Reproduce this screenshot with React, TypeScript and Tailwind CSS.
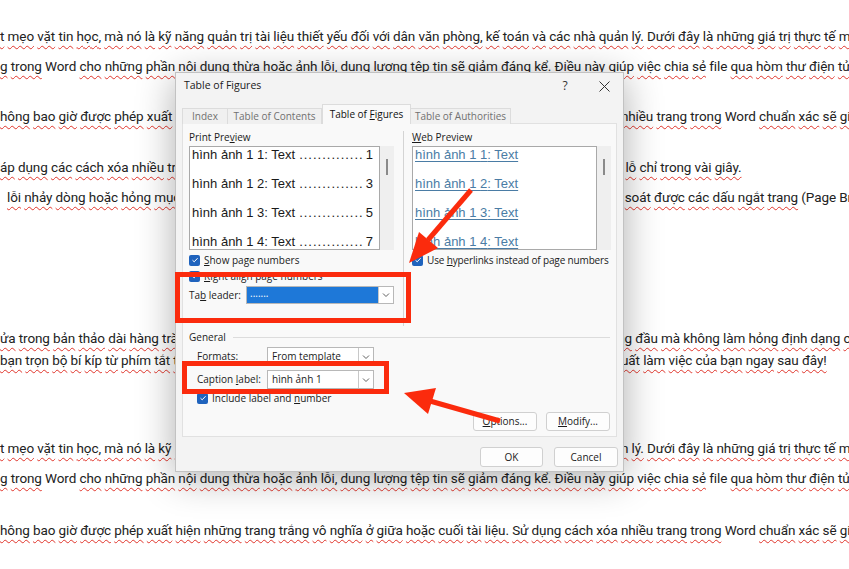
import React from 'react';

const NO_UL = new Set(['Word', 'file', '(Page', 'Break)']);

function DocLine({ text, className }: { text: string; className: string }) {
  const parts = text.split(' ');
  return (
    <div className={`whitespace-nowrap h-[20px] leading-[20px] ${className}`}>
      {parts.map((w, i) => (
        <React.Fragment key={i}>
          {i > 0 ? ' ' : ''}
          {NO_UL.has(w) ? (
            w
          ) : (
            <span className="underline decoration-wavy decoration-[#e0352b] decoration-1 underline-offset-[4px]">{w}</span>
          )}
        </React.Fragment>
      ))}
    </div>
  );
}

const L1 =
  't mẹo vặt tin học, mà nó là kỹ năng quản trị tài liệu thiết yếu đối với dân văn phòng, kế toán và các nhà quản lý. Dưới đây là những giá trị thực tế mà thủ thuật này mang lại.';
const L2 =
  'g trong Word cho những phần nội dung thừa hoặc ảnh lỗi, dung lượng tệp tin sẽ giảm đáng kể. Điều này giúp việc chia sẻ file qua hòm thư điện tử trở nên nhanh hơn.';
const L3 =
  'hông bao giờ được phép xuất hiện những trang trắng vô nghĩa ở giữa hoặc cuối tài liệu. Sử dụng cách xóa nhiều trang trong Word chuẩn xác sẽ giúp văn bản luôn chỉn chu.';
const L4 =
  'áp dụng các cách xóa nhiều trang trong Word đúng kỹ thuật bạn nhanh chóng loại bỏ mọi khoảng trống và lỗ chỉ trong vài giây.';
const L5 =
  'lỗi nhảy dòng hoặc hỏng mục lục tự động. Khi nắm vững kỹ thuật xóa trang này, bạn luôn hoàn toàn kiểm soát được các dấu ngắt trang (Page Break) một cách dễ dàng.';
const L6 =
  'ửa trong bản thảo dài hàng trăm trang, bạn vẫn có thể dễ dàng dọn dẹp các trang trống ngay từ những trang đầu mà không làm hỏng định dạng của tài liệu.';
const L7 =
  'bạn trọn bộ bí kíp từ phím tắt thần tốc đến những công cụ chuyên sâu nhằm tối ưu hóa và nâng cao hiệu suất làm việc của bạn ngay sau đây!';

function Check() {
  return (
    <span className="flex h-[11px] w-[11px] shrink-0 items-center justify-center rounded-[2px] bg-[#1f63bd]">
      <svg width="8" height="8" viewBox="0 0 8 8">
        <polyline points="1.5,4.2 3.2,5.8 6.6,2.2" fill="none" stroke="#ffffff" strokeWidth="1" />
      </svg>
    </span>
  );
}

function Chevron() {
  return (
    <svg width="10" height="10" viewBox="0 0 10 10">
      <polyline points="2,3.5 5,6.5 8,3.5" fill="none" stroke="#606060" strokeWidth="1" />
    </svg>
  );
}

function PrintEntry({ n, p }: { n: string; p: string }) {
  return (
    <div className="flex h-[16px] items-center leading-[16px] whitespace-nowrap">
      <span>hình ảnh 1 {n}: Text</span>
      <span className="ml-[4px] flex-1 overflow-hidden tracking-[1px]">..............</span>
      <span className="ml-[3px]">{p}</span>
    </div>
  );
}

function WebEntry({ n }: { n: string }) {
  return (
    <div className="h-[16px] leading-[16px] whitespace-nowrap text-[#4a7ca5] underline underline-offset-[2px] decoration-[#4a7ca5]">
      hình ảnh 1 {n}: Text
    </div>
  );
}

function Btn({ children, className }: { children: React.ReactNode; className: string }) {
  return (
    <div
      className={`flex h-[19px] items-center justify-center rounded-[3px] border border-[#d0d0d0] bg-[#fdfdfd] ${className}`}
    >
      {children}
    </div>
  );
}

function Dialog() {
  return (
    <div className="absolute left-[175px] top-[72px] flex h-[400px] w-[449px] flex-col border border-[#c2c2c2] bg-[#f3f3f3] font-['Open_Sans',sans-serif] text-[10px] text-[#1b1b1b] shadow-[0_6px_36px_rgba(0,0,0,0.32)]">
      {/* title bar */}
      <div className="flex h-[26px] items-center pl-[8px]">
        <span className="flex-1 text-[10.5px] text-[#202020]">Table of Figures</span>
        <span className="w-[20px] text-center text-[12px] text-[#333]">?</span>
        <span className="w-[10px]" />
        <span className="flex w-[38px] items-center justify-center">
          <svg width="11" height="11" viewBox="0 0 11 11">
            <line x1="0.5" y1="0.5" x2="10.5" y2="10.5" stroke="#333" strokeWidth="1" />
            <line x1="10.5" y1="0.5" x2="0.5" y2="10.5" stroke="#333" strokeWidth="1" />
          </svg>
        </span>
      </div>
      {/* tabs */}
      <div className="relative z-10 mt-[5px] flex h-[20px] items-end pl-[6px] -mb-px">
        <div className="flex h-[16px] w-[46px] items-center justify-center border border-b-0 border-[#dcdcdc] bg-[#f0f0f0] text-[#707070]">
          Index
        </div>
        <div className="flex h-[16px] w-[94px] items-center justify-center border border-b-0 border-l-0 border-[#dcdcdc] bg-[#f0f0f0] text-[#707070]">
          Table of Contents
        </div>
        <div className="flex h-[20px] w-[89px] items-center justify-center border border-b-0 border-[#dcdcdc] bg-[#f9f9f9] text-[#111]">
          <span>
            Table of <span className="underline underline-offset-[1px]">F</span>igures
          </span>
        </div>
        <div className="flex h-[16px] w-[100px] items-center justify-center border border-b-0 border-l-0 border-[#dcdcdc] bg-[#f0f0f0] text-[#707070]">
          Table of Authorities
        </div>
      </div>
      {/* panel */}
      <div className="mx-[6px] flex h-[314px] flex-col border border-[#e1e1e1] bg-[#f9f9f9]">
        <div className="flex h-[202px]">
          {/* left column */}
          <div className="flex w-[220px] flex-col pl-[6px]">
            <div className="mt-[6px] h-[14px] leading-[14px]">
              Print Pre<span className="underline underline-offset-[1px]">v</span>iew
            </div>
            <div className="mt-[2px] flex h-[104px]">
              <div className="flex w-[191px] flex-col gap-[13px] overflow-hidden border border-[#a9a9a9] bg-white pl-[2px] pr-[6px] font-['Liberation_Sans',Arial,sans-serif] text-[13px] text-[#1a1a1a]">
                <PrintEntry n="1" p="1" />
                <PrintEntry n="2" p="3" />
                <PrintEntry n="3" p="5" />
                <PrintEntry n="4" p="7" />
              </div>
              <div className="relative w-[14px] bg-[#efefef]">
                <div className="absolute left-[6px] top-[13px] h-[16px] w-[2px] bg-[#8a8a8a]" />
              </div>
            </div>
            <div className="mt-[3px] flex h-[14px] items-center gap-[4px]">
              <Check />
              <span>
                <span className="underline underline-offset-[1px]">S</span>how page numbers
              </span>
            </div>
            <div className="mt-[2px] flex h-[14px] items-center gap-[4px]">
              <Check />
              <span>
                <span className="underline underline-offset-[1px]">R</span>ight align page numbers
              </span>
            </div>
            <div className="mt-[3px] flex h-[18px] items-center">
              <span className="w-[57px]">
                Ta<span className="underline underline-offset-[1px]">b</span> leader:
              </span>
              <div className="flex h-[18px] w-[148px] border border-[#b8b8b8] bg-white">
                <div className="flex flex-1 items-center bg-[#1e78d8] pl-[3px] text-[10px] leading-none text-white">
                  <span className="-mt-[4px]">.......</span>
                </div>
                <div className="flex w-[15px] items-center justify-center border-l border-[#c8c8c8]">
                  <Chevron />
                </div>
              </div>
            </div>
          </div>
          {/* separator */}
          <div className="mt-[7px] h-[195px] w-px bg-[#d4d4d4]" />
          {/* right column */}
          <div className="flex flex-col pl-[8px]">
            <div className="mt-[6px] h-[14px] leading-[14px]">
              <span className="underline underline-offset-[1px]">W</span>eb Preview
            </div>
            <div className="mt-[2px] flex h-[104px]">
              <div className="flex w-[185px] flex-col gap-[13px] overflow-hidden border border-[#a9a9a9] bg-white pl-[2px] font-['Liberation_Sans',Arial,sans-serif] text-[13px]">
                <WebEntry n="1" />
                <WebEntry n="2" />
                <WebEntry n="3" />
                <WebEntry n="4" />
              </div>
              <div className="relative w-[14px] bg-[#efefef]">
                <div className="absolute left-[6px] top-[13px] h-[16px] w-[2px] bg-[#8a8a8a]" />
              </div>
            </div>
            <div className="mt-[3px] flex h-[14px] items-center gap-[4px] tracking-[-0.15px]">
              <Check />
              <span>
                Use <span className="underline underline-offset-[1px]">h</span>yperlinks instead of page numbers
              </span>
            </div>
          </div>
        </div>
        {/* general */}
        <div className="mt-[4px] flex h-[14px] items-center pl-[6px] pr-[6px]">
          <span>General</span>
          <div className="ml-[7px] h-px flex-1 bg-[#dcdcdc]" />
        </div>
        <div className="mt-[3px] flex h-[19px] items-center pl-[14px]">
          <span className="w-[70px]">Formats:</span>
          <div className="flex h-[19px] w-[107px] border border-[#b8b8b8] bg-white">
            <div className="flex flex-1 items-center pl-[4px]">From template</div>
            <div className="flex w-[15px] items-center justify-center border-l border-[#c8c8c8]">
              <Chevron />
            </div>
          </div>
        </div>
        <div className="mt-[4px] flex h-[19px] items-center pl-[14px]">
          <span className="w-[70px]">
            Caption <span className="underline underline-offset-[1px]">l</span>abel:
          </span>
          <div className="flex h-[19px] w-[107px] border border-[#b8b8b8] bg-white">
            <div className="flex flex-1 items-center pl-[4px]">hình ảnh 1</div>
            <div className="flex w-[15px] items-center justify-center border-l border-[#c8c8c8]">
              <Chevron />
            </div>
          </div>
        </div>
        <div className="mt-[2px] flex h-[14px] items-center gap-[4px] pl-[14px]">
          <Check />
          <span>
            Include label and <span className="underline underline-offset-[1px]">n</span>umber
          </span>
        </div>
        <div className="mt-[7px] flex justify-end gap-[9px] pr-[6px]">
          <Btn className="w-[64px]">
            <span>
              <span className="underline underline-offset-[1px]">O</span>ptions...
            </span>
          </Btn>
          <Btn className="w-[64px]">
            <span>
              <span className="underline underline-offset-[1px]">M</span>odify...
            </span>
          </Btn>
        </div>
      </div>
      {/* footer */}
      <div className="mt-[10px] flex justify-end gap-[11px] pr-[5px]">
        <Btn className="h-[20px] w-[63px]">OK</Btn>
        <Btn className="h-[20px] w-[64px]">Cancel</Btn>
      </div>
    </div>
  );
}

function Annotations() {
  const red = '#fb2b0d';
  return (
    <>
      <div className="absolute left-[175px] top-[272px] h-[51px] w-[236px] border-[5px] border-[#fb2b0d]" />
      <div className="absolute left-[182px] top-[361px] h-[33px] w-[207px] border-[5px] border-[#fb2b0d]" />
      <svg className="pointer-events-none absolute left-0 top-0" width="849" height="569" viewBox="0 0 849 569">
        <line x1="471" y1="190" x2="428" y2="240" stroke={red} strokeWidth="5" />
        <polygon points="409,263 438,248 419,232" fill={red} />
        <line x1="500" y1="421" x2="430" y2="401" stroke={red} strokeWidth="5" />
        <polygon points="404,393 436,388 428,414" fill={red} />
      </svg>
    </>
  );
}

export default function App() {
  return (
    <div className="relative h-[569px] w-[849px] overflow-hidden bg-white">
      <div className="flex flex-col font-['Roboto',sans-serif] text-[13.5px] tracking-[-0.1px] text-[#222]">
        <DocLine text={L1} className="mt-[26px]" />
        <DocLine text={L2} className="mt-[10px]" />
        <DocLine text={L3} className="mt-[30px]" />
        <DocLine text={L4} className="mt-[31px]" />
        <DocLine text={L5} className="mt-[10px] pl-[7px]" />
        <DocLine text={L6} className="mt-[121px]" />
        <DocLine text={L7} className="mt-[2px]" />
        <DocLine text={L1} className="mt-[68px]" />
        <DocLine text={L2} className="mt-[10px]" />
        <DocLine text={L3} className="mt-[32px]" />
      </div>
      <Dialog />
      <Annotations />
    </div>
  );
}
